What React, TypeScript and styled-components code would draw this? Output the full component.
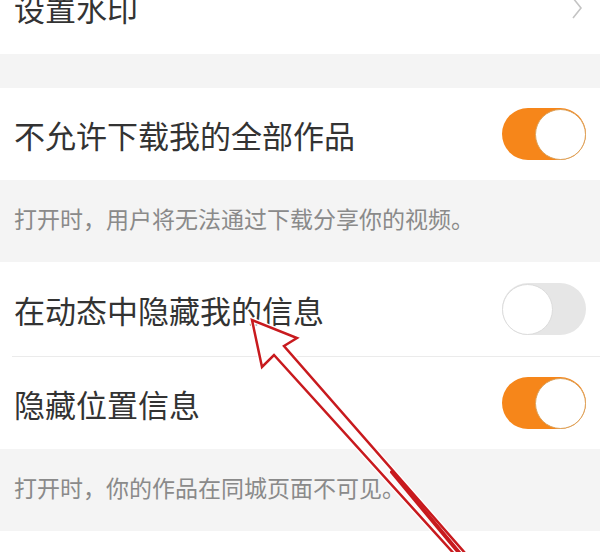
import * as React from "react";
import styled, { createGlobalStyle } from "styled-components";

const GlobalStyle = createGlobalStyle`
  html, body {
    margin: 0;
    padding: 0;
    background: #ffffff;
  }
  body {
    font-family: "Noto Sans CJK SC", "Noto Sans", sans-serif;
  }
`;

type Setting = {
  title: string;
  on: boolean;
  note?: string;
  divider?: boolean;
};

const settings: Setting[] = [
  {
    title: "不允许下载我的全部作品",
    on: true,
    note: "打开时，用户将无法通过下载分享你的视频。",
  },
  { title: "在动态中隐藏我的信息", on: false, divider: true },
  {
    title: "隐藏位置信息",
    on: true,
    note: "打开时，你的作品在同城页面不可见。",
  },
];

// hand-drawn annotation arrow, pointing at the second switch row
const arrowPoints =
  "252,320 262,367 274,355 457,557 465,553 284,346 297,338";

export default function App() {
  return (
    <Page>
      <GlobalStyle />
      <List>
        <Row height={93}>
          <Title>设置水印</Title>
          <Chevron width="12" height="22" viewBox="0 0 12 22">
            <polyline
              points="2,1 10,11 2,21"
              fill="none"
              stroke="#c4c4c4"
              strokeWidth="1.6"
            />
          </Chevron>
        </Row>
        <Gap />
        {settings.map((item) => (
          <React.Fragment key={item.title}>
            <Row height={item.divider ? 94 : 92}>
              <Title>{item.title}</Title>
              <Toggle on={item.on}>
                <Knob on={item.on} />
              </Toggle>
            </Row>
            {item.divider && <Divider />}
            {item.note && <Note>{item.note}</Note>}
          </React.Fragment>
        ))}
      </List>
      <Arrow viewBox="0 0 600 552" width="600" height="552">
        <polygon
          points={arrowPoints}
          fill="#ffffff"
          fillOpacity="0.55"
          stroke="#fff"
          strokeWidth="5"
          strokeLinejoin="round"
        />
        <polygon
          points={arrowPoints}
          fill="none"
          stroke="#c81a1e"
          strokeWidth="2.5"
          strokeLinejoin="miter"
        />
        <line
          x1="392"
          y1="472"
          x2="461"
          y2="555"
          stroke="#c81a1e"
          strokeWidth="4"
          strokeLinecap="round"
        />
      </Arrow>
    </Page>
  );
}

const Page = styled.div`
  position: relative;
  width: 600px;
  height: 552px;
  overflow: hidden;
  background: #ffffff;
`;

const List = styled.div`
  display: flex;
  flex-direction: column;
  margin-top: -39px;
`;

const Row = styled.div<{ height: number }>`
  display: flex;
  align-items: center;
  justify-content: space-between;
  height: ${(p) => p.height}px;
  padding: 0 14px 0 14px;
  background: #ffffff;
`;

const Title = styled.span`
  font-size: 31px;
  line-height: 1;
  color: #333333;
`;

const Chevron = styled.svg`
  margin-right: 3px;
  flex-shrink: 0;
`;

const Gap = styled.div`
  height: 34px;
  background: #f4f4f4;
`;

const Note = styled.div`
  display: flex;
  align-items: center;
  height: 82px;
  padding: 0 0 6px 14px;
  box-sizing: border-box;
  background: #f4f4f4;
  font-size: 23px;
  color: #8a8a8a;
`;

const Divider = styled.div`
  height: 1px;
  margin-left: 12px;
  background: #ebebeb;
`;

const Toggle = styled.div<{ on: boolean }>`
  display: flex;
  align-items: center;
  justify-content: ${(p) => (p.on ? "flex-end" : "flex-start")};
  width: 84px;
  height: 52px;
  border-radius: 26px;
  background: ${(p) => (p.on ? "#f6861a" : "#e6e6e6")};
  flex-shrink: 0;
  box-sizing: border-box;
`;

const Knob = styled.div<{ on: boolean }>`
  width: 51px;
  height: 51px;
  border-radius: 50%;
  background: #ffffff;
  box-sizing: border-box;
  border: 1.5px solid ${(p) => (p.on ? "#dba25c" : "#dcdcdc")};
`;

const Arrow = styled.svg`
  position: absolute;
  left: 0;
  top: 0;
  pointer-events: none;
`;
